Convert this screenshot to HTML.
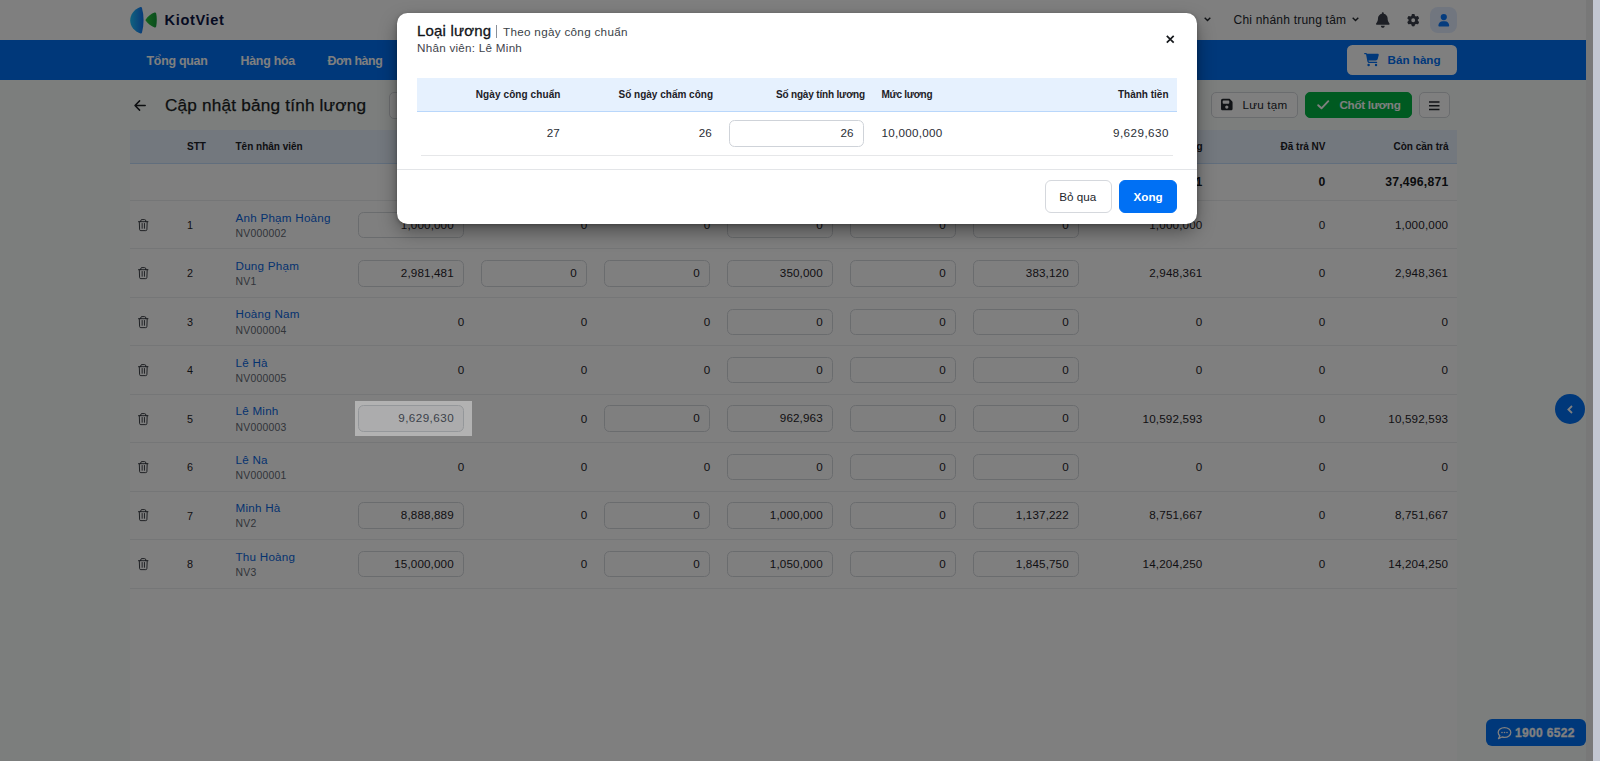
<!DOCTYPE html>
<html lang="vi">
<head>
<meta charset="utf-8">
<title>KiotViet - Cập nhật bảng tính lương</title>
<style>
*{box-sizing:border-box;margin:0;padding:0}
html,body{width:1600px;height:761px;overflow:hidden;background:#fff}
body{font-family:"Liberation Sans",sans-serif;color:#1f2329;position:relative;font-size:11.67px}
#app{position:absolute;left:0;top:0;width:1593px;height:761px;overflow:hidden;background:#f8fdfa}
.abs{position:absolute;white-space:nowrap}
/* top bar */
.top{position:absolute;left:0;top:0;width:1586px;height:40px;background:#fff}
.brand{left:164.6px;top:9.7px;font-size:14.6px;line-height:20px;font-weight:700;color:#0c1644;letter-spacing:.62px}
.branch{left:1233.5px;top:10px;font-size:12px;letter-spacing:.21px;line-height:20px;color:#22262c}
.avatar{left:1430px;top:6.7px;width:26.5px;height:26.2px;border-radius:8px;background:#e2ecff}
/* nav */
.nav{position:absolute;left:0;top:40px;width:1586px;height:40px;background:#0070f4}
.nav a{position:absolute;top:10.8px;line-height:20px;font-size:12.4px;letter-spacing:-.25px;font-weight:700;color:#fff;white-space:nowrap;text-decoration:none}
.sell{left:1347px;top:45px;width:110px;height:30px;border-radius:5.5px;background:#fff}
.sell span{position:absolute;left:40.5px;top:5px;line-height:20px;font-size:11.67px;font-weight:700;color:#0070f4}
/* title row */
.ptitle{left:165px;top:93.3px;font-size:17.2px;letter-spacing:.19px;-webkit-text-stroke:.25px #1b1e23;line-height:24px;color:#1b1e23}
.btn{position:absolute;top:92px;height:26px;border-radius:5px;border:1px solid #d5d8dd;background:#fff}
.btn span{position:absolute;top:2px;line-height:20px;font-size:11.67px;white-space:nowrap}
.btn.green{background:#00b543;border-color:#00b543}
.btn.green span{color:#fff;font-weight:700;letter-spacing:-.3px}
/* grid */
.grid{position:absolute;left:130px;top:130px;width:1326.5px;height:631px;background:#fff}
.ghead{position:absolute;left:0;top:0;width:100%;height:33.5px;background:#e6f0fd;border-bottom:1px solid #c3dcfa}
.ghead span{position:absolute;top:9.9px;line-height:14px;font-size:10px;font-weight:700;color:#1c2026;white-space:nowrap}
.gsum{position:absolute;left:0;top:33.5px;width:100%;height:36.5px;background:#fff}
.gsum span{position:absolute;top:9.5px;line-height:18px;font-size:12.2px;letter-spacing:.23px;font-weight:700;color:#15181d;white-space:nowrap}
.row{position:absolute;left:0;width:100%;height:48.45px;background:#fff;border-top:1px solid #ebecee}
.row .no{position:absolute;left:57px;top:15px;line-height:18px;font-size:10.8px;color:#1f2329}
.row .nm{position:absolute;left:105.5px;top:8.6px;line-height:16px;font-size:11.67px;letter-spacing:.23px;color:#0a66e0;white-space:nowrap}
.row .cd{position:absolute;left:105.5px;top:25.8px;line-height:14px;font-size:10.4px;letter-spacing:.25px;color:#646a73;white-space:nowrap}
.row .v{position:absolute;top:14.8px;line-height:18px;font-size:11.67px;letter-spacing:.16px;color:#1f2329;text-align:right;white-space:nowrap}
.row .in{position:absolute;top:10.7px;height:26.4px;width:106.3px;border:1px solid #d5d8dd;border-radius:5.5px;background:#fff;text-align:right;padding:3px 9.5px 0 0;line-height:18px;font-size:11.67px;letter-spacing:.12px;color:#1f2329;white-space:nowrap}
.row .in.dis{background:#f6f7f8;color:#565d6b;letter-spacing:.45px;padding-right:9.2px}
.trash{position:absolute;left:8.1px;top:17.8px;width:10.5px;height:12.2px}
/* floating */
.fab{left:1555px;top:394px;width:30px;height:30px;border-radius:50%;background:#0070f4}
.hot{left:1486px;top:719px;width:100px;height:27px;border-radius:6px;background:#0070f4}
.hot span{position:absolute;left:29px;top:3.5px;line-height:20px;font-size:12px;letter-spacing:.35px;-webkit-text-stroke:.3px #fff;font-weight:700;color:#fff;white-space:nowrap}
.track{left:1586px;top:0;width:7px;height:761px;background:#f0f0f0}
.sbar{left:1593px;top:0;width:7px;height:761px;background:#c2c6d1}
/* overlay + modal */
.overlay{left:0;top:0;width:1593px;height:761px;background:none}
.spot{left:355px;top:401px;width:117.2px;height:35px;background:rgba(0,0,0,.3);box-shadow:0 0 0 2400px rgba(0,0,0,.5)}
.modal{left:397px;top:13px;width:800px;height:210.6px;border-radius:10.5px;background:#fff;box-shadow:0 8px 20px -2px rgba(0,0,0,.45),0 1px 4px rgba(0,0,0,.25)}
.mt1{left:20px;top:7.2px;line-height:22px;font-size:15px;letter-spacing:.18px;-webkit-text-stroke:.3px #111418;color:#111418}
.mt2{left:106px;top:9px;line-height:20px;font-size:11.67px;letter-spacing:.31px;color:#3a3f47}
.mt3{left:20px;top:26.1px;line-height:18px;font-size:11.67px;letter-spacing:.26px;color:#3f444c}
.mhead{left:20px;top:65px;width:759.5px;height:33.5px;background:#e6f1fe;border-bottom:1px solid #b9d7fb}
.mhead span{position:absolute;top:10.3px;line-height:14px;font-size:10px;font-weight:700;color:#1c2026;white-space:nowrap}
.mrow span{position:absolute;top:111px;line-height:18px;font-size:11.67px;color:#2a2e35;white-space:nowrap}
.min{left:332.4px;top:107.2px;width:134.3px;height:26.5px;border:1px solid #cfd3d9;border-radius:5.5px;background:#fff}
.mline{left:24px;top:142px;width:751.5px;height:1px;background:#e6e7e9}
.mfoot{left:0;top:155.7px;width:800px;height:1px;background:#e3e5e8}
.mb{position:absolute;top:167.3px;height:32.6px;border-radius:6px;border:1px solid #d5d8dd;background:#fff}
.mb span{position:absolute;top:5.3px;line-height:20px;font-size:11.67px;white-space:nowrap;color:#22262c}
.mb.pri{background:#0070f4;border-color:#0070f4}
.mb.pri span{color:#fff;font-weight:700}
svg{position:absolute;display:block;overflow:visible}
</style>
</head>
<body>
<div id="app">
  <div class="top">
    <svg style="left:130px;top:6.5px" width="27" height="27" viewBox="0 0 27 27"><defs><linearGradient id="gg" x1="0" y1="0" x2="1" y2="0"><stop offset="0" stop-color="#2cc83c"/><stop offset="1" stop-color="#149a3a"/></linearGradient><linearGradient id="lg" x1="0" y1="0" x2="1" y2="0"><stop offset="0" stop-color="#22c4ff"/><stop offset="1" stop-color="#1272f0"/></linearGradient></defs><path d="M10.5 0.100 C4 2.500 0.200 8 0.200 13.400 C0.200 18.800 4 24.200 10.500 26.500 C11.300 26.700 11.800 26.300 12 25.600 C14.100 17.500 14.100 9 12 1 C11.800 .3 11.300 -.1 10.500 .1Z" fill="url(#lg)"/><path d="M15.600 12.800 C17.800 9.300 21.300 6.600 24.600 5.600 C25.500 5.400 26 5.800 26.200 6.600 C27 10.500 27 15.500 26.200 19.400 C26 20.200 25.500 20.600 24.600 20.400 C21.300 19.400 17.800 16.700 15.600 13.600 C15.400 13.300 15.400 13.100 15.600 12.800Z" fill="url(#gg)"/></svg>
    <div class="abs brand">KiotViet</div>
    <svg style="left:1204px;top:17px" width="7" height="5" viewBox="0 0 7 5"><path d="M.7.8 3.5 3.6 6.3.8" fill="none" stroke="#22262c" stroke-width="1.4"/></svg>
    <div class="abs branch" style="left:auto;right:395px">Tiếng Việt</div>
    <div class="abs branch">Chi nhánh trung tâm</div>
    <svg style="left:1351.5px;top:17px" width="7" height="5" viewBox="0 0 7 5"><path d="M.7.8 3.5 3.6 6.3.8" fill="none" stroke="#22262c" stroke-width="1.4"/></svg>
    <svg style="left:1376.4px;top:12px" width="13.6" height="16" viewBox="0 0 448 512"><path fill="#3a3f4a" d="M224 0c-17.700 0-32 14.300-32 32V51.200C119 66 64 130.600 64 208v18.800c0 47-17.300 92.400-48.500 127.600l-7.400 8.300c-8.400 9.400-10.400 22.900-5.300 34.400S19.400 416 32 416H416c12.600 0 24-7.400 29.200-18.900s3.100-25-5.300-34.400l-7.400-8.300C401.300 319.200 384 273.900 384 226.800V208c0-77.400-55-142-128-156.800V32c0-17.700-14.300-32-32-32zm45.300 493.300c12-12 18.700-28.300 18.700-45.300H224 160c0 17 6.700 33.300 18.700 45.300s28.300 18.700 45.300 18.700s33.300-6.700 45.300-18.700z"/></svg>
    <svg style="left:1407px;top:14px" width="12.4" height="12.4" viewBox="0 0 512 512"><path fill="#3a3f4a" d="M495.900 166.600c3.200 8.700 .5 18.400-6.400 24.600l-43.300 39.400c1.100 8.300 1.700 16.800 1.700 25.400s-.6 17.100-1.700 25.400l43.300 39.400c6.900 6.200 9.600 15.900 6.400 24.600c-4.400 11.900-9.700 23.300-15.800 34.300l-4.700 8.100c-6.600 11-14 21.400-22.100 31.200c-5.900 7.200-15.700 9.600-24.500 6.800l-55.700-17.700c-13.400 10.300-28.200 18.900-44 25.400l-12.500 57.100c-2 9.100-9 16.300-18.200 17.800c-13.800 2.300-28 3.500-42.500 3.500s-28.700-1.200-42.500-3.500c-9.200-1.500-16.200-8.700-18.200-17.800l-12.500-57.100c-15.800-6.500-30.600-15.100-44-25.400L83.100 425.900c-8.800 2.800-18.600 .3-24.500-6.800c-8.100-9.800-15.500-20.200-22.100-31.200l-4.700-8.100c-6.100-11-11.400-22.400-15.800-34.300c-3.200-8.700-.5-18.400 6.400-24.600l43.300-39.400C64.600 273.100 64 264.600 64 256s.6-17.100 1.700-25.400L22.400 191.200c-6.900-6.200-9.600-15.900-6.400-24.600c4.400-11.900 9.700-23.300 15.800-34.300l4.700-8.100c6.600-11 14-21.400 22.100-31.200c5.900-7.200 15.700-9.600 24.500-6.800l55.700 17.700c13.400-10.300 28.200-18.900 44-25.400l12.500-57.100c2-9.100 9-16.300 18.200-17.800C227.300 1.200 241.500 0 256 0s28.700 1.200 42.500 3.500c9.200 1.500 16.200 8.700 18.200 17.800l12.500 57.100c15.800 6.500 30.600 15.100 44 25.400l55.700-17.700c8.800-2.800 18.600-.3 24.500 6.800c8.100 9.800 15.500 20.200 22.100 31.200l4.700 8.100c6.100 11 11.400 22.400 15.800 34.300zM256 336a80 80 0 1 0 0-160 80 80 0 1 0 0 160z"/></svg>
    <div class="abs avatar"></div>
    <svg style="left:1437.5px;top:14px" width="11.6" height="12.4" viewBox="0 0 448 512"><path fill="#0a78fc" d="M224 256A128 128 0 1 0 224 0a128 128 0 1 0 0 256zm-45.700 48C79.800 304 0 383.800 0 482.300C0 498.700 13.300 512 29.700 512H418.300c16.400 0 29.700-13.300 29.700-29.700C448 383.800 368.200 304 269.700 304H178.300z"/></svg>
  </div>
  <div class="nav">
    <a style="left:146.5px">Tổng quan</a>
    <a style="left:240.5px">Hàng hóa</a>
    <a style="left:327.5px;letter-spacing:-.45px">Đơn hàng</a>
    <a style="left:415px">Khách hàng</a>
    <a style="left:515px">Nhân viên</a>
    <a style="left:605px">Sổ quỹ</a>
    <a style="left:680px">Báo cáo</a>
    <a style="left:760px">Bán online</a>
  </div>
  <div class="abs sell">
    <svg style="left:17px;top:8.4px" width="15" height="13.2" viewBox="0 0 576 512"><path fill="#0070f4" d="M0 24C0 10.700 10.700 0 24 0H69.500c22 0 41.500 12.800 50.600 32h411c26.300 0 45.500 25 38.600 50.400l-41 152.300c-8.500 31.400-37 53.300-69.500 53.300H170.700l5.400 28.500c2.200 11.300 12.100 19.500 23.600 19.500H488c13.300 0 24 10.700 24 24s-10.700 24-24 24H199.700c-34.600 0-64.300-24.600-70.700-58.500L77.400 54.500c-.7-3.800-4-6.500-7.900-6.500H24C10.700 48 0 37.300 0 24zM128 464a48 48 0 1 1 96 0 48 48 0 1 1 -96 0zm336-48a48 48 0 1 1 0 96 48 48 0 1 1 0-96z"/></svg>
    <span>Bán hàng</span>
  </div>

  <svg style="left:134px;top:99.5px" width="12" height="11" viewBox="0 0 12 11"><path d="M5.600.9 1 5.500 5.600 10.100M1.300 5.500H11.200" fill="none" stroke="#1b1e23" stroke-width="1.500" stroke-linecap="round" stroke-linejoin="round"/></svg>
  <div class="abs ptitle">Cập nhật bảng tính lương</div>
  <div class="btn" style="left:389.3px;width:150px;top:91.5px;height:27px"><span style="left:26px;color:#8a8f98">Tìm nhân viên</span></div>
  <div class="btn" style="left:1210.5px;width:87.5px">
    <svg style="left:9.3px;top:5.300px" width="11.6" height="13.200" viewBox="0 0 448 512"><path fill="#22262c" d="M64 32C28.700 32 0 60.700 0 96V416c0 35.300 28.700 64 64 64H384c35.300 0 64-28.700 64-64V173.300c0-17-6.700-33.300-18.700-45.300L352 50.700C340 38.700 323.700 32 306.700 32H64zm0 96c0-17.700 14.300-32 32-32H288c17.700 0 32 14.300 32 32v64c0 17.700-14.300 32-32 32H96c-17.700 0-32-14.300-32-32V128zM224 288a64 64 0 1 1 0 128 64 64 0 1 1 0-128z"/></svg>
    <span style="left:31px;color:#22262c;letter-spacing:.2px">Lưu tạm</span>
  </div>
  <div class="btn green" style="left:1305px;width:106.5px">
    <svg style="left:10.800px;top:6.800px" width="12.500" height="9.500" viewBox="0 0 12.500 9.500"><path d="M1.200 5.200 4.500 8.300 11.300 1.200" fill="none" stroke="#fff" stroke-width="1.900" stroke-linecap="round" stroke-linejoin="round"/></svg>
    <span style="left:33.500px">Chốt lương</span>
  </div>
  <div class="btn" style="left:1418.5px;width:31px">
    <svg style="left:9.500px;top:7.500px" width="10.500" height="9.500" viewBox="0 0 10.500 9.500"><path d="M0 1h10.500M0 4.750h10.500M0 8.500h10.500" stroke="#22262c" stroke-width="1.500"/></svg>
  </div>

  <div class="grid" id="grid">
    <div class="ghead">
      <span style="left:57px">STT</span>
      <span style="left:105.500px">Tên nhân viên</span>
      <span style="right:993px">Lương chính</span>
      <span style="right:870px">Làm thêm</span>
      <span style="right:747px">Hoa hồng</span>
      <span style="right:624px">Phụ cấp</span>
      <span style="right:501px">Thưởng</span>
      <span style="right:378px">Giảm trừ</span>
      <span style="right:254px">Tổng lương</span>
      <span style="right:131px">Đã trả NV</span>
      <span style="right:8px">Còn cần trả</span>
    </div>
    <div class="gsum">
      <span style="right:873px">37,500,000</span>
      <span style="right:750px">0</span>
      <span style="right:627px">0</span>
      <span style="right:504px">3,362,963</span>
      <span style="right:381px">0</span>
      <span style="right:258px">3,366,092</span>
      <span style="right:254px">37,496,871</span>
      <span style="right:131px">0</span>
      <span style="right:8px">37,496,871</span>
    </div>
    <div class="row" style="top:70.00px"><svg class="trash" viewBox="0 0 10.5 12.2"><path d="M.5 2.700H10M2.700 2.600V1.900a1.300 1.300 0 0 1 1.300-1.300h2.500a1.300 1.300 0 0 1 1.300 1.300v.7M1.300 2.900l.3 7.600a1.200 1.200 0 0 0 1.200 1.150h4.900a1.200 1.200 0 0 0 1.200-1.150l.3-7.600M4.150 4.500v4.800M6.450 4.500v4.800" fill="none" stroke="#2a2e35" stroke-width=".9" stroke-linecap="round" stroke-linejoin="round"/></svg><span class="no">1</span><span class="nm">Anh Phạm Hoàng</span><span class="cd">NV000002</span><span class="in" style="left:228px">1,000,000</span><span class="v" style="right:869.2px">0</span><span class="v" style="right:746.2px">0</span><span class="in" style="left:597px">0</span><span class="in" style="left:720px">0</span><span class="in" style="left:843px">0</span><span class="v" style="right:254px">1,000,000</span><span class="v" style="right:131px">0</span><span class="v" style="right:8.3px">1,000,000</span></div>
    <div class="row" style="top:118.45px"><svg class="trash" viewBox="0 0 10.5 12.2"><path d="M.5 2.700H10M2.700 2.600V1.900a1.300 1.300 0 0 1 1.300-1.300h2.500a1.300 1.300 0 0 1 1.300 1.300v.7M1.300 2.900l.3 7.600a1.200 1.200 0 0 0 1.200 1.150h4.900a1.200 1.200 0 0 0 1.200-1.150l.3-7.600M4.150 4.500v4.800M6.450 4.500v4.800" fill="none" stroke="#2a2e35" stroke-width=".9" stroke-linecap="round" stroke-linejoin="round"/></svg><span class="no">2</span><span class="nm">Dung Phạm</span><span class="cd">NV1</span><span class="in" style="left:228px">2,981,481</span><span class="in" style="left:351px">0</span><span class="in" style="left:474px">0</span><span class="in" style="left:597px">350,000</span><span class="in" style="left:720px">0</span><span class="in" style="left:843px">383,120</span><span class="v" style="right:254px">2,948,361</span><span class="v" style="right:131px">0</span><span class="v" style="right:8.3px">2,948,361</span></div>
    <div class="row" style="top:166.90px"><svg class="trash" viewBox="0 0 10.5 12.2"><path d="M.5 2.700H10M2.700 2.600V1.900a1.300 1.300 0 0 1 1.300-1.300h2.500a1.300 1.300 0 0 1 1.300 1.300v.7M1.300 2.900l.3 7.600a1.200 1.200 0 0 0 1.200 1.150h4.900a1.200 1.200 0 0 0 1.200-1.150l.3-7.600M4.150 4.500v4.800M6.450 4.500v4.800" fill="none" stroke="#2a2e35" stroke-width=".9" stroke-linecap="round" stroke-linejoin="round"/></svg><span class="no">3</span><span class="nm">Hoàng Nam</span><span class="cd">NV000004</span><span class="v" style="right:992.2px">0</span><span class="v" style="right:869.2px">0</span><span class="v" style="right:746.2px">0</span><span class="in" style="left:597px">0</span><span class="in" style="left:720px">0</span><span class="in" style="left:843px">0</span><span class="v" style="right:254px">0</span><span class="v" style="right:131px">0</span><span class="v" style="right:8.3px">0</span></div>
    <div class="row" style="top:215.35px"><svg class="trash" viewBox="0 0 10.5 12.2"><path d="M.5 2.700H10M2.700 2.600V1.900a1.300 1.300 0 0 1 1.300-1.300h2.500a1.300 1.300 0 0 1 1.300 1.300v.7M1.300 2.900l.3 7.600a1.200 1.200 0 0 0 1.200 1.150h4.900a1.200 1.200 0 0 0 1.200-1.150l.3-7.600M4.150 4.500v4.800M6.450 4.500v4.800" fill="none" stroke="#2a2e35" stroke-width=".9" stroke-linecap="round" stroke-linejoin="round"/></svg><span class="no">4</span><span class="nm">Lê Hà</span><span class="cd">NV000005</span><span class="v" style="right:992.2px">0</span><span class="v" style="right:869.2px">0</span><span class="v" style="right:746.2px">0</span><span class="in" style="left:597px">0</span><span class="in" style="left:720px">0</span><span class="in" style="left:843px">0</span><span class="v" style="right:254px">0</span><span class="v" style="right:131px">0</span><span class="v" style="right:8.3px">0</span></div>
    <div class="row" style="top:263.80px"><svg class="trash" viewBox="0 0 10.5 12.2"><path d="M.5 2.700H10M2.700 2.600V1.900a1.300 1.300 0 0 1 1.300-1.300h2.500a1.300 1.300 0 0 1 1.300 1.300v.7M1.300 2.900l.3 7.600a1.200 1.200 0 0 0 1.200 1.150h4.900a1.200 1.200 0 0 0 1.200-1.150l.3-7.600M4.150 4.500v4.800M6.450 4.500v4.800" fill="none" stroke="#2a2e35" stroke-width=".9" stroke-linecap="round" stroke-linejoin="round"/></svg><span class="no">5</span><span class="nm">Lê Minh</span><span class="cd">NV000003</span><span class="in dis" style="left:228px">9,629,630</span><span class="v" style="right:869.2px">0</span><span class="in" style="left:474px">0</span><span class="in" style="left:597px">962,963</span><span class="in" style="left:720px">0</span><span class="in" style="left:843px">0</span><span class="v" style="right:254px">10,592,593</span><span class="v" style="right:131px">0</span><span class="v" style="right:8.3px">10,592,593</span></div>
    <div class="row" style="top:312.25px"><svg class="trash" viewBox="0 0 10.5 12.2"><path d="M.5 2.700H10M2.700 2.600V1.900a1.300 1.300 0 0 1 1.300-1.300h2.500a1.300 1.300 0 0 1 1.300 1.300v.7M1.300 2.900l.3 7.600a1.200 1.200 0 0 0 1.200 1.150h4.900a1.200 1.200 0 0 0 1.200-1.150l.3-7.600M4.150 4.500v4.800M6.450 4.500v4.800" fill="none" stroke="#2a2e35" stroke-width=".9" stroke-linecap="round" stroke-linejoin="round"/></svg><span class="no">6</span><span class="nm">Lê Na</span><span class="cd">NV000001</span><span class="v" style="right:992.2px">0</span><span class="v" style="right:869.2px">0</span><span class="v" style="right:746.2px">0</span><span class="in" style="left:597px">0</span><span class="in" style="left:720px">0</span><span class="in" style="left:843px">0</span><span class="v" style="right:254px">0</span><span class="v" style="right:131px">0</span><span class="v" style="right:8.3px">0</span></div>
    <div class="row" style="top:360.70px"><svg class="trash" viewBox="0 0 10.5 12.2"><path d="M.5 2.700H10M2.700 2.600V1.900a1.300 1.300 0 0 1 1.300-1.300h2.500a1.300 1.300 0 0 1 1.300 1.300v.7M1.300 2.900l.3 7.600a1.200 1.200 0 0 0 1.200 1.150h4.900a1.200 1.200 0 0 0 1.200-1.150l.3-7.600M4.150 4.500v4.800M6.450 4.500v4.800" fill="none" stroke="#2a2e35" stroke-width=".9" stroke-linecap="round" stroke-linejoin="round"/></svg><span class="no">7</span><span class="nm">Minh Hà</span><span class="cd">NV2</span><span class="in" style="left:228px">8,888,889</span><span class="v" style="right:869.2px">0</span><span class="in" style="left:474px">0</span><span class="in" style="left:597px">1,000,000</span><span class="in" style="left:720px">0</span><span class="in" style="left:843px">1,137,222</span><span class="v" style="right:254px">8,751,667</span><span class="v" style="right:131px">0</span><span class="v" style="right:8.3px">8,751,667</span></div>
    <div class="row" style="top:409.15px"><svg class="trash" viewBox="0 0 10.5 12.2"><path d="M.5 2.700H10M2.700 2.600V1.900a1.300 1.300 0 0 1 1.300-1.300h2.500a1.300 1.300 0 0 1 1.300 1.300v.7M1.300 2.900l.3 7.600a1.200 1.200 0 0 0 1.200 1.150h4.900a1.200 1.200 0 0 0 1.200-1.150l.3-7.600M4.150 4.500v4.800M6.450 4.500v4.800" fill="none" stroke="#2a2e35" stroke-width=".9" stroke-linecap="round" stroke-linejoin="round"/></svg><span class="no">8</span><span class="nm">Thu Hoàng</span><span class="cd">NV3</span><span class="in" style="left:228px">15,000,000</span><span class="v" style="right:869.2px">0</span><span class="in" style="left:474px">0</span><span class="in" style="left:597px">1,050,000</span><span class="in" style="left:720px">0</span><span class="in" style="left:843px">1,845,750</span><span class="v" style="right:254px">14,204,250</span><span class="v" style="right:131px">0</span><span class="v" style="right:8.3px">14,204,250</span></div>
    <div class="row" style="top:457.60px;height:1px;background:none"></div>
  </div>

  <div class="abs fab"><svg style="left:11.500px;top:10.500px" width="6" height="9" viewBox="0 0 6 9"><path d="M5 1 1.400 4.500 5 8" fill="none" stroke="#fff" stroke-width="1.800"/></svg></div>
  <div class="abs hot">
    <svg style="left:10.500px;top:7.500px" width="14.500" height="12.500" viewBox="0 0 14.500 12.500"><path d="M7.500.7C3.900.7 1.200 2.800 1.200 5.500c0 1.300.7 2.500 1.700 3.300L1.500 11.600 5 10c.8.200 1.600.3 2.500.3 3.600 0 6.300-2.100 6.300-4.800S11.100.7 7.500.7Z" fill="none" stroke="#fff" stroke-width="1.300" stroke-linejoin="round"/><circle cx="5" cy="5.500" r=".8" fill="#fff"/><circle cx="7.500" cy="5.500" r=".8" fill="#fff"/><circle cx="10" cy="5.500" r=".8" fill="#fff"/></svg>
    <span>1900 6522</span>
  </div>
  <div class="abs track"></div>

  <div class="abs overlay"></div>
  <div class="abs spot"></div>

  <div class="abs modal">
    <div class="abs mt1">Loại lương</div>
    <div class="abs" style="left:99px;top:12px;width:1px;height:13px;background:#8a8f98"></div>
    <div class="abs mt2">Theo ngày công chuẩn</div>
    <div class="abs mt3">Nhân viên: Lê Minh</div>
    <svg style="left:769px;top:22px" width="8.500" height="8.500" viewBox="0 0 8.500 8.500"><path d="M.8.800 7.700 7.700M7.700.8.800 7.700" stroke="#16191d" stroke-width="1.700"/></svg>
    <div class="abs mhead">
      <span style="right:616px;letter-spacing:.09px">Ngày công chuẩn</span>
      <span style="right:463.500px">Số ngày chấm công</span>
      <span style="right:311.500px;letter-spacing:-.17px">Số ngày tính lương</span>
      <span style="left:464.500px;letter-spacing:-.28px">Mức lương</span>
      <span style="right:8px">Thành tiền</span>
    </div>
    <div class="mrow">
      <span style="right:637.300px">27</span>
      <span style="right:485.300px">26</span>
      <div class="abs min"></div>
      <span style="right:343.500px">26</span>
      <span style="left:484.500px;letter-spacing:.26px">10,000,000</span>
      <span style="right:28.100px;letter-spacing:.45px">9,629,630</span>
    </div>
    <div class="abs mline"></div>
    <div class="abs mfoot"></div>
    <div class="mb" style="left:648.300px;width:66.700px"><span style="left:13px">Bỏ qua</span></div>
    <div class="mb pri" style="left:721.600px;width:58.300px"><span style="left:14px">Xong</span></div>
  </div>
</div>
<div class="abs sbar"></div>
</body>
</html>
